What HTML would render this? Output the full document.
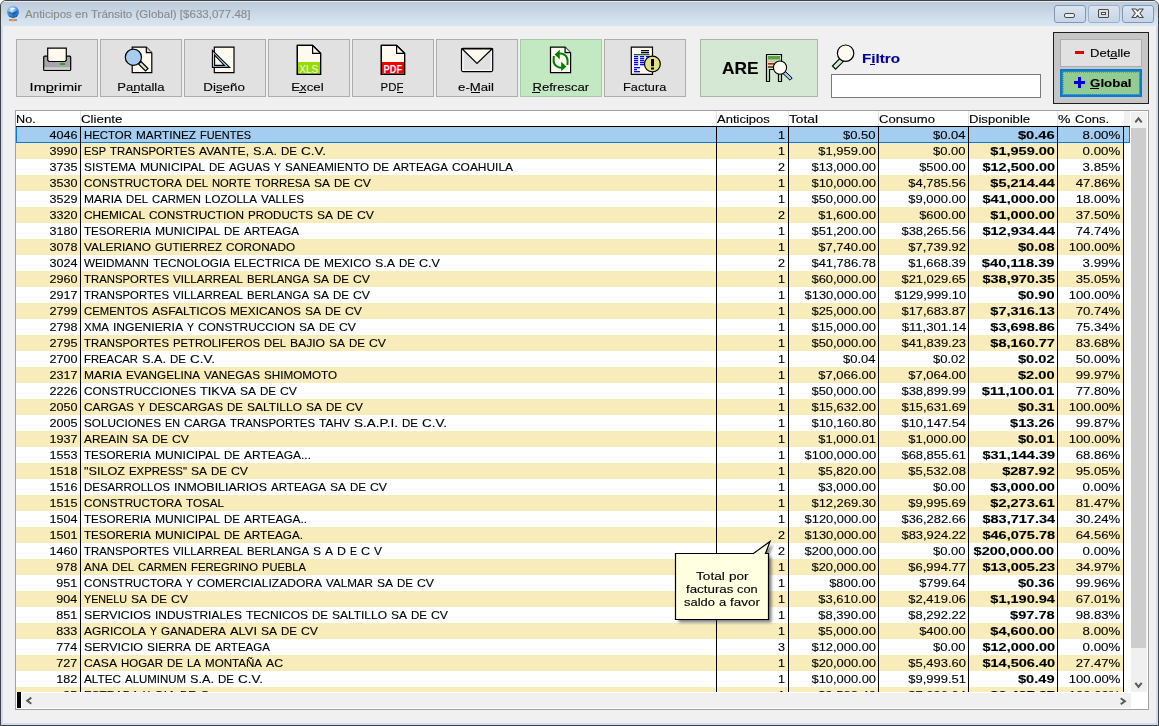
<!DOCTYPE html><html><head><meta charset="utf-8"><style>
*{box-sizing:border-box;margin:0;padding:0}
html,body{width:1159px;height:726px;overflow:hidden;background:#fff;font-family:"Liberation Sans",sans-serif;font-size:11px;color:#000}
.a{position:absolute}
.t{position:absolute;white-space:pre;display:block;-webkit-text-stroke:0.12px currentColor}
#win{position:absolute;left:0;top:0;width:1159px;height:726px;background:#cddcee;border:1px solid #404040;border-radius:6px 6px 0 0}
#title{position:absolute;left:1px;top:1px;width:1157px;height:25px;background:linear-gradient(#e6edf5 0,#e6edf5 1px,#bccbdb 1px,#c5d3e1 8px,#d2e0ee 18px,#d7e5f3 25px);border-radius:5px 5px 0 0}
#content{position:absolute;left:3px;top:26px;width:1153px;height:697px;background:#f0f0f0}
.tb{position:absolute;top:39px;width:82px;height:58px;background:#e1e1e1;border:1px solid #adadad}
.tbtn{position:absolute;top:5px;width:32px;height:18px;border:1px solid #8796b0;border-radius:3px;background:linear-gradient(#d9e4f0,#c5d5e8)}
.u{position:absolute;height:1px;background:#000}
</style></head><body>
<div id="win"></div><div id="title"></div>
<span class="t" style="left:25px;top:6px;font-size:11.5px;line-height:16px;color:#8a8a8a;transform:scaleX(1.0050);transform-origin:left;">Anticipos en Tránsito (Global) [$633,077.48]</span>
<svg class="a" style="left:5px;top:4px" width="18" height="20"><defs><radialGradient id="gl" cx="0.4" cy="0.3" r="0.75"><stop offset="0" stop-color="#e8f4ff"/><stop offset="0.35" stop-color="#7ab8f0"/><stop offset="0.75" stop-color="#2a78d0"/><stop offset="1" stop-color="#0c4a9a"/></radialGradient></defs><circle cx="8" cy="8" r="5.9" fill="url(#gl)"/><path d="M3 8.5 C4.5 7.5 6 8 7 9.5 C8 8 10 7.5 12.5 6.5 C12 9 10 10.5 8.5 12 C7.5 10.5 5 10 3 8.5 Z" fill="#1458a8" opacity="0.85"/><path d="M5 4.5 C6.5 3.5 9 3.5 10.5 4.5 C9 5.5 7 5.5 5 4.5 Z" fill="#ffffff" opacity="0.8"/><rect x="4" y="15" width="8" height="2" fill="#9a9a9a"/><circle cx="8" cy="16" r="1.5" fill="#f0a030"/></svg>
<div class="tbtn" style="left:1054px;border-color:#8796b0"></div>
<div class="tbtn" style="left:1088px;border-color:#a3afc0"></div>
<div class="tbtn" style="left:1122px;border-color:#8796b0"></div>
<div class="a" style="left:1064px;top:13px;width:11px;height:5px;background:#ececec;border:1px solid #4a4a4a;border-radius:2px"></div>
<div class="a" style="left:1098px;top:9px;width:11px;height:9px;border:1.5px solid #4a4a4a;background:#dcdcdc;border-radius:1px"></div><div class="a" style="left:1101px;top:12px;width:5px;height:3px;border:1px solid #4a4a4a;background:#f4f4f4"></div>
<svg class="a" style="left:0;top:0" width="1159" height="26"><path d="M1132 9 H1136 L1137.6 11.1 L1139.2 9 H1143.2 L1139.9 13.25 L1143.2 17.5 H1139.2 L1137.6 15.4 L1136 17.5 H1132 L1135.3 13.25 Z" fill="#f6f6f6" stroke="#4a4a4a" stroke-width="1.1" stroke-linejoin="round"/></svg>
<div id="content"></div>
<div class="tb" style="left:16px;"></div>
<span class="t" style="left:36.19px;top:79px;font-size:11px;line-height:16px;color:#000;transform:scaleX(1.3219);transform-origin:center;">Imprimir</span>
<div class="u" style="left:47px;top:92px;width:7px"></div>
<div class="tb" style="left:100px;"></div>
<span class="t" style="left:120.57px;top:79px;font-size:11px;line-height:16px;color:#000;transform:scaleX(1.1899);transform-origin:center;">Pantalla</span>
<div class="u" style="left:132px;top:92px;width:7px"></div>
<div class="tb" style="left:184px;"></div>
<span class="t" style="left:207.18px;top:79px;font-size:11px;line-height:16px;color:#000;transform:scaleX(1.2149);transform-origin:center;">Diseño</span>
<div class="u" style="left:216px;top:92px;width:6px"></div>
<div class="tb" style="left:268px;"></div>
<span class="t" style="left:294.30px;top:79px;font-size:11px;line-height:16px;color:#000;transform:scaleX(1.2008);transform-origin:center;">Excel</span>
<div class="u" style="left:299px;top:92px;width:7px"></div>
<div class="tb" style="left:352px;"></div>
<span class="t" style="left:380.90px;top:79px;font-size:11px;line-height:16px;color:#000;transform:scaleX(1.0364);transform-origin:center;">PDF</span>
<div class="u" style="left:397px;top:92px;width:6px"></div>
<div class="tb" style="left:436px;"></div>
<span class="t" style="left:460.93px;top:79px;font-size:11px;line-height:16px;color:#000;transform:scaleX(1.1953);transform-origin:center;">e-Mail</span>
<div class="u" style="left:471px;top:92px;width:9px"></div>
<div class="tb" style="left:520px;background:#c2e9c2;border-color:#a8c8a8;"></div>
<span class="t" style="left:536.76px;top:79px;font-size:11px;line-height:16px;color:#000;transform:scaleX(1.1871);transform-origin:center;">Refrescar</span>
<div class="u" style="left:532px;top:92px;width:8px"></div>
<div class="tb" style="left:604px;"></div>
<span class="t" style="left:625.60px;top:79px;font-size:11px;line-height:16px;color:#000;transform:scaleX(1.1558);transform-origin:center;">Factura</span>
<div class="a" style="left:700px;top:39px;width:118px;height:58px;background:#d5e8d4;border:1px solid #a8b8a8"></div>
<span class="t" style="left:721.5px;top:58px;font-size:16.5px;line-height:20px;font-weight:bold;color:#000;transform:scaleX(1.0477);transform-origin:left;">ARE</span>
<span class="t" style="left:861.5px;top:50.5px;font-size:12.5px;line-height:16px;font-weight:bold;color:#00009a;transform:scaleX(1.2162);transform-origin:left;">Filtro</span>
<div class="u" style="left:870px;top:64px;width:5px;background:#00009a"></div>
<div class="a" style="left:831px;top:74px;width:210px;height:24px;background:#fff;border:1px solid #7a7a7a"></div>
<div class="a" style="left:1053px;top:32px;width:96px;height:72px;background:#c6c6c6;border:1px solid #1e1e1e"></div>
<div class="a" style="left:1060px;top:39px;width:82px;height:28px;background:#e1e1e1;border:1px solid #adadad"></div>
<div class="a" style="left:1075px;top:51px;width:9px;height:3px;background:#e00000"></div>
<span class="t" style="left:1090px;top:45px;font-size:11px;line-height:16px;color:#000;transform:scaleX(1.1828);transform-origin:left;">Detalle</span>
<div class="u" style="left:1110px;top:58px;width:7px"></div>
<div class="a" style="left:1060px;top:69px;width:82px;height:28px;background:#92cc92;border:2px solid #0a78d6"></div>
<div class="a" style="left:1062px;top:71px;width:78px;height:24px;border:1px solid #2f8f9a"></div>
<div class="a" style="left:1063px;top:72px;width:77px;height:23px;border:1px dotted #a080b0"></div>
<div class="a" style="left:1074px;top:81px;width:11px;height:3px;background:#0000e0"></div><div class="a" style="left:1078px;top:77px;width:3px;height:11px;background:#0000e0"></div>
<span class="t" style="left:1090px;top:74.5px;font-size:11.5px;line-height:16px;font-weight:bold;color:#000;transform:scaleX(1.1599);transform-origin:left;">Global</span>
<div class="u" style="left:1090px;top:88px;width:9px"></div>
<svg class="a" style="left:0;top:0" width="1159" height="100"><rect x="43.7" y="56.2" width="27" height="14.3" rx="1" fill="#a6a5ab" stroke="#000" stroke-width="1.2" stroke-linejoin="miter"/><rect x="44.5" y="67.3" width="25.5" height="2.3" fill="#cfcfd2"/><path d="M47.7 48.2 H66.3 V60.2 L65 61.5 H49 L47.7 60.2 Z" fill="#fffaf0" stroke="#000" stroke-width="1.2" stroke-linejoin="miter"/><rect x="60" y="63" width="5" height="2" fill="#38a010"/><path d="M132.2 47.2 H146.3 L151.8 52.7 V72.7 H132.2 Z" fill="#fffaf0" stroke="#000" stroke-width="1.2" stroke-linejoin="miter"/><path d="M146.3 47.2 V52.7 H151.8" fill="#d0d0d0" stroke="#000" stroke-width="1.2" stroke-linejoin="miter"/><path d="M141 61.5 L148 68.5 L145.5 71 L138.5 64 Z" fill="#cdeccd" stroke="#000" stroke-width="1.2" stroke-linejoin="miter"/><circle cx="133.4" cy="57.2" r="8.1" fill="#a8ccf0" stroke="#000" stroke-width="1.2" stroke-linejoin="miter"/><path d="M214.3 47.2 H234 V72.7 H214.3 Z" fill="#fffaf0" stroke="#000" stroke-width="1.2" stroke-linejoin="miter"/><path d="M212.4 50.3 V67.4 H229.7 Z M214.6 55.2 V65.4 H224.4 Z" fill="#b4d8fc" fill-rule="evenodd" stroke="#000" stroke-width="1.1"/><path d="M297.3 45.3 H312.6 L320.6 53.3 V74.3 H297.3 Z" fill="#fffaf0" stroke="#000" stroke-width="1.2" stroke-linejoin="miter"/><rect x="298" y="62" width="22" height="11.6" fill="#98dc00"/><path d="M312.6 45.3 V53.3 H320.6" fill="none" stroke="#000" stroke-width="1.2" stroke-linejoin="miter"/><path d="M297.3 45.3 H312.6 L320.6 53.3 V74.3 H297.3 Z" fill="none" stroke="#000" stroke-width="1.2" stroke-linejoin="miter"/><text x="308.8" y="72.6" font-family="Liberation Sans" font-size="11.2" fill="#f4f4e8" text-anchor="middle" textLength="19" lengthAdjust="spacingAndGlyphs">XLS</text><path d="M381.3 45.3 H396.6 L404.6 53.3 V74.3 H381.3 Z" fill="#fffaf0" stroke="#000" stroke-width="1.2" stroke-linejoin="miter"/><rect x="382" y="62" width="22" height="11.6" fill="#f00000"/><path d="M396.6 45.3 V53.3 H404.6" fill="none" stroke="#000" stroke-width="1.2" stroke-linejoin="miter"/><path d="M381.3 45.3 H396.6 L404.6 53.3 V74.3 H381.3 Z" fill="none" stroke="#000" stroke-width="1.2" stroke-linejoin="miter"/><text x="392.8" y="72.6" font-family="Liberation Sans" font-size="11" font-weight="bold" fill="#f6f6f6" text-anchor="middle" textLength="18.5" lengthAdjust="spacingAndGlyphs">PDF</text><rect x="461.5" y="48.3" width="31.2" height="23.3" rx="1.5" fill="#e0e0e0" stroke="#000" stroke-width="1.2" stroke-linejoin="miter"/><rect x="463" y="50" width="28.2" height="20.3" fill="none" stroke="#fff" stroke-width="1"/><path d="M462.3 49 L477 63.5 L492 49 Z" fill="#fffaf0" stroke="#000" stroke-width="1.2" stroke-linejoin="miter"/><path d="M550.5 47.2 H565.1 L570.6 52.7 V72.7 H550.5 Z" fill="#fffaf0" stroke="#000" stroke-width="1.2" stroke-linejoin="miter"/><path d="M565.1 47.2 V52.7 H570.6" fill="#d8f0d8" stroke="#000" stroke-width="1.2" stroke-linejoin="miter"/><path d="M554.6 54.5 L559.8 49.8 V59.2 Z M566.4 66.5 L561.2 61.8 V71.2 Z" fill="#008000"/><path d="M559 53.6 A7.2 7.2 0 0 1 567.6 61 L567.4 65 M562 67.6 A7.2 7.2 0 0 1 553.6 60 L553.8 56" fill="none" stroke="#008000" stroke-width="2"/><path d="M631.3 47.2 H652.5 V74.3 H631.3 Z" fill="#fffaf0" stroke="#000" stroke-width="1.2" stroke-linejoin="miter"/><rect x="641" y="50" width="8" height="1.3" fill="#000"/><rect x="641" y="52" width="8" height="1.3" fill="#000"/><rect x="634" y="54" width="15.5" height="1.3" fill="#1a5a5a"/><rect x="634" y="56" width="4.2" height="1.3" fill="#0000ff"/><rect x="640" y="56" width="4.2" height="1.3" fill="#0000ff"/><rect x="646" y="56" width="3.5" height="1.3" fill="#0000ff"/><rect x="634" y="58" width="4.2" height="1.3" fill="#0000ff"/><rect x="640" y="58" width="4.2" height="1.3" fill="#0000ff"/><rect x="646" y="58" width="3.5" height="1.3" fill="#0000ff"/><rect x="634" y="60" width="4.2" height="1.3" fill="#0000ff"/><rect x="640" y="60" width="4.2" height="1.3" fill="#0000ff"/><rect x="646" y="60" width="3.5" height="1.3" fill="#0000ff"/><rect x="634" y="62" width="4.2" height="1.3" fill="#0000ff"/><rect x="640" y="62" width="4.2" height="1.3" fill="#0000ff"/><rect x="646" y="62" width="3.5" height="1.3" fill="#0000ff"/><rect x="634" y="64" width="4.2" height="1.3" fill="#0000ff"/><rect x="640" y="64" width="4.2" height="1.3" fill="#0000ff"/><rect x="646" y="64" width="3.5" height="1.3" fill="#0000ff"/><rect x="634" y="67" width="6" height="1.3" fill="#0000ff"/><rect x="634" y="69" width="3" height="1.3" fill="#0000ff"/><rect x="634" y="71" width="6" height="1.3" fill="#0000ff"/><circle cx="652.4" cy="64" r="7.9" fill="#e0e08a" stroke="#000" stroke-width="1.2" stroke-linejoin="miter"/><rect x="651" y="59" width="3" height="7.2" fill="#000"/><rect x="651" y="67.5" width="3" height="2" fill="#000"/><path d="M766.5 54.5 H781.5 V81.5 H778.5 V69.5 H769.5 V81.5 H766.5 Z" fill="#cde8cd" stroke="#000" stroke-width="1.2"/><rect x="768" y="56" width="12" height="3.5" fill="#60a040"/><rect x="768" y="60.5" width="12" height="1.5" fill="#b0d0b0"/><rect x="768" y="63" width="7" height="1.6" fill="#ff0000"/><rect x="768" y="66" width="5" height="2" fill="#606040"/><path d="M782.6 73.2 L784.8 71 L792.2 78 L790 80.2 Z" fill="#a8c8f0" stroke="#000" stroke-width="1"/><circle cx="780" cy="67.6" r="6.6" fill="#fffaf0" stroke="#000" stroke-width="1.1"/><path d="M840 58.4 L843.2 61.6 L835.6 69.2 L832.4 66 Z" fill="#cdeccd" stroke="#000" stroke-width="1.1"/><circle cx="845.6" cy="53.2" r="8.2" fill="#fffaf0" stroke="#000" stroke-width="1.2"/></svg>
<div class="a" style="left:15px;top:110px;width:1134px;height:600px;background:#fff;border:1px solid #a0a0a0"></div>
<span class="t" style="left:16px;top:111px;font-size:11px;line-height:16px;color:#000;transform:scaleX(1.1488);transform-origin:left;">No.</span>
<span class="t" style="left:81px;top:111px;font-size:11px;line-height:16px;color:#000;transform:scaleX(1.2091);transform-origin:left;">Cliente</span>
<span class="t" style="left:717px;top:111px;font-size:11px;line-height:16px;color:#000;transform:scaleX(1.1826);transform-origin:left;">Anticipos</span>
<span class="t" style="left:789px;top:111px;font-size:11px;line-height:16px;color:#000;transform:scaleX(1.2472);transform-origin:left;">Total</span>
<span class="t" style="left:879px;top:111px;font-size:11px;line-height:16px;color:#000;transform:scaleX(1.1872);transform-origin:left;">Consumo</span>
<span class="t" style="left:969px;top:111px;font-size:11px;line-height:16px;color:#000;transform:scaleX(1.1889);transform-origin:left;">Disponible</span>
<span class="t" style="left:1058px;top:111px;font-size:11px;line-height:16px;color:#000;transform:scaleX(1.2698);transform-origin:left;">%</span><span class="t" style="left:1074.56px;top:111px;font-size:11px;line-height:16px;color:#000;transform:scaleX(1.1886);transform-origin:left;">Cons.</span>
<div class="a" style="left:80px;top:111px;width:1px;height:15px;background:#e5e5e5"></div>
<div class="a" style="left:716px;top:111px;width:1px;height:15px;background:#e5e5e5"></div>
<div class="a" style="left:788px;top:111px;width:1px;height:15px;background:#e5e5e5"></div>
<div class="a" style="left:878px;top:111px;width:1px;height:15px;background:#e5e5e5"></div>
<div class="a" style="left:968px;top:111px;width:1px;height:15px;background:#e5e5e5"></div>
<div class="a" style="left:1057px;top:111px;width:1px;height:15px;background:#e5e5e5"></div>
<div class="a" style="left:1124px;top:111px;width:6px;height:15px;background:#f0f0f0"></div>
<div class="a" style="left:16px;top:126px;width:1108px;height:1px;background:#000"></div>
<div class="a" style="left:0;top:0;width:1159px;height:692px;overflow:hidden">
<div class="a" style="left:16px;top:127px;width:1107px;height:16px;background:#a4cdef"></div>
<span class="t" style="left:52.53px;top:127px;font-size:11px;line-height:16px;color:#000;transform:scaleX(1.1442);transform-origin:right;">4046</span>
<span class="t" style="left:83.5px;top:127px;font-size:11px;line-height:16px;color:#000;transform:scaleX(1.0379);transform-origin:left;">HECTOR</span><span class="t" style="left:135.5px;top:127px;font-size:11px;line-height:16px;color:#000;transform:scaleX(1.0710);transform-origin:left;">MARTINEZ</span><span class="t" style="left:199.5px;top:127px;font-size:11px;line-height:16px;color:#000;transform:scaleX(0.9934);transform-origin:left;">FUENTES</span>
<span class="t" style="left:779.28px;top:127px;font-size:11px;line-height:16px;color:#000;transform:scaleX(1.1442);transform-origin:right;">1</span>
<span class="t" style="left:848.37px;top:127px;font-size:11px;line-height:16px;color:#000;transform:scaleX(1.1843);transform-origin:right;">$0.50</span>
<span class="t" style="left:938.37px;top:127px;font-size:11px;line-height:16px;color:#000;transform:scaleX(1.1843);transform-origin:right;">$0.04</span>
<span class="t" style="left:1027.07px;top:127px;font-size:11px;line-height:16px;font-weight:bold;color:#000;transform:scaleX(1.3296);transform-origin:right;">$0.46</span>
<span class="t" style="left:1088.81px;top:127px;font-size:11px;line-height:16px;color:#000;transform:scaleX(1.2055);transform-origin:right;">8.00%</span>
<div class="a" style="left:16px;top:143px;width:1107px;height:16px;background:#f8edba"></div>
<span class="t" style="left:52.53px;top:143px;font-size:11px;line-height:16px;color:#000;transform:scaleX(1.1442);transform-origin:right;">3990</span>
<span class="t" style="left:83.5px;top:143px;font-size:11px;line-height:16px;color:#000;transform:scaleX(0.9995);transform-origin:left;">ESP</span><span class="t" style="left:109.5px;top:143px;font-size:11px;line-height:16px;color:#000;transform:scaleX(1.0326);transform-origin:left;">TRANSPORTES</span><span class="t" style="left:198.5px;top:143px;font-size:11px;line-height:16px;color:#000;transform:scaleX(1.1005);transform-origin:left;">AVANTE,</span><span class="t" style="left:252.5px;top:143px;font-size:11px;line-height:16px;color:#000;transform:scaleX(1.1546);transform-origin:left;">S.A.</span><span class="t" style="left:280.5px;top:143px;font-size:11px;line-height:16px;color:#000;transform:scaleX(1.0471);transform-origin:left;">DE</span><span class="t" style="left:300.5px;top:143px;font-size:11px;line-height:16px;color:#000;transform:scaleX(1.2265);transform-origin:left;">C.V.</span>
<span class="t" style="left:779.28px;top:143px;font-size:11px;line-height:16px;color:#000;transform:scaleX(1.1442);transform-origin:right;">1</span>
<span class="t" style="left:826.96px;top:143px;font-size:11px;line-height:16px;color:#000;transform:scaleX(1.1770);transform-origin:right;">$1,959.00</span>
<span class="t" style="left:938.37px;top:143px;font-size:11px;line-height:16px;color:#000;transform:scaleX(1.1843);transform-origin:right;">$0.00</span>
<span class="t" style="left:1005.66px;top:143px;font-size:11px;line-height:16px;font-weight:bold;color:#000;transform:scaleX(1.3201);transform-origin:right;">$1,959.00</span>
<span class="t" style="left:1088.81px;top:143px;font-size:11px;line-height:16px;color:#000;transform:scaleX(1.2055);transform-origin:right;">0.00%</span>
<div class="a" style="left:16px;top:159px;width:1107px;height:16px;background:#ffffff"></div>
<span class="t" style="left:52.53px;top:159px;font-size:11px;line-height:16px;color:#000;transform:scaleX(1.1442);transform-origin:right;">3735</span>
<span class="t" style="left:83.5px;top:159px;font-size:11px;line-height:16px;color:#000;transform:scaleX(1.0769);transform-origin:left;">SISTEMA</span><span class="t" style="left:139.5px;top:159px;font-size:11px;line-height:16px;color:#000;transform:scaleX(1.1002);transform-origin:left;">MUNICIPAL</span><span class="t" style="left:208.5px;top:159px;font-size:11px;line-height:16px;color:#000;transform:scaleX(1.0471);transform-origin:left;">DE</span><span class="t" style="left:228.5px;top:159px;font-size:11px;line-height:16px;color:#000;transform:scaleX(1.0646);transform-origin:left;">AGUAS</span><span class="t" style="left:273.5px;top:159px;font-size:11px;line-height:16px;color:#000;transform:scaleX(0.9541);transform-origin:left;">Y</span><span class="t" style="left:284.5px;top:159px;font-size:11px;line-height:16px;color:#000;transform:scaleX(1.0517);transform-origin:left;">SANEAMIENTO</span><span class="t" style="left:372.5px;top:159px;font-size:11px;line-height:16px;color:#000;transform:scaleX(1.0471);transform-origin:left;">DE</span><span class="t" style="left:392.5px;top:159px;font-size:11px;line-height:16px;color:#000;transform:scaleX(1.0502);transform-origin:left;">ARTEAGA</span><span class="t" style="left:451.5px;top:159px;font-size:11px;line-height:16px;color:#000;transform:scaleX(1.0847);transform-origin:left;">COAHUILA</span>
<span class="t" style="left:779.28px;top:159px;font-size:11px;line-height:16px;color:#000;transform:scaleX(1.1442);transform-origin:right;">2</span>
<span class="t" style="left:820.85px;top:159px;font-size:11px;line-height:16px;color:#000;transform:scaleX(1.1734);transform-origin:right;">$13,000.00</span>
<span class="t" style="left:926.14px;top:159px;font-size:11px;line-height:16px;color:#000;transform:scaleX(1.1720);transform-origin:right;">$500.00</span>
<span class="t" style="left:999.55px;top:159px;font-size:11px;line-height:16px;font-weight:bold;color:#000;transform:scaleX(1.3187);transform-origin:right;">$12,500.00</span>
<span class="t" style="left:1088.81px;top:159px;font-size:11px;line-height:16px;color:#000;transform:scaleX(1.2055);transform-origin:right;">3.85%</span>
<div class="a" style="left:16px;top:175px;width:1107px;height:16px;background:#f8edba"></div>
<span class="t" style="left:52.53px;top:175px;font-size:11px;line-height:16px;color:#000;transform:scaleX(1.1442);transform-origin:right;">3530</span>
<span class="t" style="left:83.5px;top:175px;font-size:11px;line-height:16px;color:#000;transform:scaleX(1.0573);transform-origin:left;">CONSTRUCTORA</span><span class="t" style="left:185.5px;top:175px;font-size:11px;line-height:16px;color:#000;transform:scaleX(1.0281);transform-origin:left;">DEL</span><span class="t" style="left:211.5px;top:175px;font-size:11px;line-height:16px;color:#000;transform:scaleX(1.0182);transform-origin:left;">NORTE</span><span class="t" style="left:254.5px;top:175px;font-size:11px;line-height:16px;color:#000;transform:scaleX(1.0382);transform-origin:left;">TORRESA</span><span class="t" style="left:313.5px;top:175px;font-size:11px;line-height:16px;color:#000;transform:scaleX(1.0904);transform-origin:left;">SA</span><span class="t" style="left:333.5px;top:175px;font-size:11px;line-height:16px;color:#000;transform:scaleX(1.0471);transform-origin:left;">DE</span><span class="t" style="left:353.5px;top:175px;font-size:11px;line-height:16px;color:#000;transform:scaleX(1.1125);transform-origin:left;">CV</span>
<span class="t" style="left:779.28px;top:175px;font-size:11px;line-height:16px;color:#000;transform:scaleX(1.1442);transform-origin:right;">1</span>
<span class="t" style="left:820.85px;top:175px;font-size:11px;line-height:16px;color:#000;transform:scaleX(1.1734);transform-origin:right;">$10,000.00</span>
<span class="t" style="left:916.96px;top:175px;font-size:11px;line-height:16px;color:#000;transform:scaleX(1.1770);transform-origin:right;">$4,785.56</span>
<span class="t" style="left:1005.66px;top:175px;font-size:11px;line-height:16px;font-weight:bold;color:#000;transform:scaleX(1.3201);transform-origin:right;">$5,214.44</span>
<span class="t" style="left:1082.69px;top:175px;font-size:11px;line-height:16px;color:#000;transform:scaleX(1.1955);transform-origin:right;">47.86%</span>
<div class="a" style="left:16px;top:191px;width:1107px;height:16px;background:#ffffff"></div>
<span class="t" style="left:52.53px;top:191px;font-size:11px;line-height:16px;color:#000;transform:scaleX(1.1442);transform-origin:right;">3529</span>
<span class="t" style="left:83.5px;top:191px;font-size:11px;line-height:16px;color:#000;transform:scaleX(1.0908);transform-origin:left;">MARIA</span><span class="t" style="left:125.5px;top:191px;font-size:11px;line-height:16px;color:#000;transform:scaleX(1.0281);transform-origin:left;">DEL</span><span class="t" style="left:151.5px;top:191px;font-size:11px;line-height:16px;color:#000;transform:scaleX(1.0279);transform-origin:left;">CARMEN</span><span class="t" style="left:204.5px;top:191px;font-size:11px;line-height:16px;color:#000;transform:scaleX(1.0500);transform-origin:left;">LOZOLLA</span><span class="t" style="left:260.5px;top:191px;font-size:11px;line-height:16px;color:#000;transform:scaleX(1.0548);transform-origin:left;">VALLES</span>
<span class="t" style="left:779.28px;top:191px;font-size:11px;line-height:16px;color:#000;transform:scaleX(1.1442);transform-origin:right;">1</span>
<span class="t" style="left:820.85px;top:191px;font-size:11px;line-height:16px;color:#000;transform:scaleX(1.1734);transform-origin:right;">$50,000.00</span>
<span class="t" style="left:916.96px;top:191px;font-size:11px;line-height:16px;color:#000;transform:scaleX(1.1770);transform-origin:right;">$9,000.00</span>
<span class="t" style="left:999.55px;top:191px;font-size:11px;line-height:16px;font-weight:bold;color:#000;transform:scaleX(1.3187);transform-origin:right;">$41,000.00</span>
<span class="t" style="left:1082.69px;top:191px;font-size:11px;line-height:16px;color:#000;transform:scaleX(1.1955);transform-origin:right;">18.00%</span>
<div class="a" style="left:16px;top:207px;width:1107px;height:16px;background:#f8edba"></div>
<span class="t" style="left:52.53px;top:207px;font-size:11px;line-height:16px;color:#000;transform:scaleX(1.1442);transform-origin:right;">3320</span>
<span class="t" style="left:83.5px;top:207px;font-size:11px;line-height:16px;color:#000;transform:scaleX(1.0731);transform-origin:left;">CHEMICAL</span><span class="t" style="left:148.5px;top:207px;font-size:11px;line-height:16px;color:#000;transform:scaleX(1.0721);transform-origin:left;">CONSTRUCTION</span><span class="t" style="left:247.5px;top:207px;font-size:11px;line-height:16px;color:#000;transform:scaleX(1.0531);transform-origin:left;">PRODUCTS</span><span class="t" style="left:316.5px;top:207px;font-size:11px;line-height:16px;color:#000;transform:scaleX(1.0904);transform-origin:left;">SA</span><span class="t" style="left:336.5px;top:207px;font-size:11px;line-height:16px;color:#000;transform:scaleX(1.0471);transform-origin:left;">DE</span><span class="t" style="left:356.5px;top:207px;font-size:11px;line-height:16px;color:#000;transform:scaleX(1.1125);transform-origin:left;">CV</span>
<span class="t" style="left:779.28px;top:207px;font-size:11px;line-height:16px;color:#000;transform:scaleX(1.1442);transform-origin:right;">2</span>
<span class="t" style="left:826.96px;top:207px;font-size:11px;line-height:16px;color:#000;transform:scaleX(1.1770);transform-origin:right;">$1,600.00</span>
<span class="t" style="left:926.14px;top:207px;font-size:11px;line-height:16px;color:#000;transform:scaleX(1.1720);transform-origin:right;">$600.00</span>
<span class="t" style="left:1005.66px;top:207px;font-size:11px;line-height:16px;font-weight:bold;color:#000;transform:scaleX(1.3201);transform-origin:right;">$1,000.00</span>
<span class="t" style="left:1082.69px;top:207px;font-size:11px;line-height:16px;color:#000;transform:scaleX(1.1955);transform-origin:right;">37.50%</span>
<div class="a" style="left:16px;top:223px;width:1107px;height:16px;background:#ffffff"></div>
<span class="t" style="left:52.53px;top:223px;font-size:11px;line-height:16px;color:#000;transform:scaleX(1.1442);transform-origin:right;">3180</span>
<span class="t" style="left:83.5px;top:223px;font-size:11px;line-height:16px;color:#000;transform:scaleX(1.0540);transform-origin:left;">TESORERIA</span><span class="t" style="left:154.5px;top:223px;font-size:11px;line-height:16px;color:#000;transform:scaleX(1.1002);transform-origin:left;">MUNICIPAL</span><span class="t" style="left:223.5px;top:223px;font-size:11px;line-height:16px;color:#000;transform:scaleX(1.0471);transform-origin:left;">DE</span><span class="t" style="left:243.5px;top:223px;font-size:11px;line-height:16px;color:#000;transform:scaleX(1.0502);transform-origin:left;">ARTEAGA</span>
<span class="t" style="left:779.28px;top:223px;font-size:11px;line-height:16px;color:#000;transform:scaleX(1.1442);transform-origin:right;">1</span>
<span class="t" style="left:820.85px;top:223px;font-size:11px;line-height:16px;color:#000;transform:scaleX(1.1734);transform-origin:right;">$51,200.00</span>
<span class="t" style="left:910.85px;top:223px;font-size:11px;line-height:16px;color:#000;transform:scaleX(1.1734);transform-origin:right;">$38,265.56</span>
<span class="t" style="left:999.55px;top:223px;font-size:11px;line-height:16px;font-weight:bold;color:#000;transform:scaleX(1.3187);transform-origin:right;">$12,934.44</span>
<span class="t" style="left:1082.69px;top:223px;font-size:11px;line-height:16px;color:#000;transform:scaleX(1.1955);transform-origin:right;">74.74%</span>
<div class="a" style="left:16px;top:239px;width:1107px;height:16px;background:#f8edba"></div>
<span class="t" style="left:52.53px;top:239px;font-size:11px;line-height:16px;color:#000;transform:scaleX(1.1442);transform-origin:right;">3078</span>
<span class="t" style="left:83.5px;top:239px;font-size:11px;line-height:16px;color:#000;transform:scaleX(1.0780);transform-origin:left;">VALERIANO</span><span class="t" style="left:154.5px;top:239px;font-size:11px;line-height:16px;color:#000;transform:scaleX(1.0542);transform-origin:left;">GUTIERREZ</span><span class="t" style="left:225.5px;top:239px;font-size:11px;line-height:16px;color:#000;transform:scaleX(1.0651);transform-origin:left;">CORONADO</span>
<span class="t" style="left:779.28px;top:239px;font-size:11px;line-height:16px;color:#000;transform:scaleX(1.1442);transform-origin:right;">1</span>
<span class="t" style="left:826.96px;top:239px;font-size:11px;line-height:16px;color:#000;transform:scaleX(1.1770);transform-origin:right;">$7,740.00</span>
<span class="t" style="left:916.96px;top:239px;font-size:11px;line-height:16px;color:#000;transform:scaleX(1.1770);transform-origin:right;">$7,739.92</span>
<span class="t" style="left:1027.07px;top:239px;font-size:11px;line-height:16px;font-weight:bold;color:#000;transform:scaleX(1.3296);transform-origin:right;">$0.08</span>
<span class="t" style="left:1076.57px;top:239px;font-size:11px;line-height:16px;color:#000;transform:scaleX(1.1882);transform-origin:right;">100.00%</span>
<div class="a" style="left:16px;top:255px;width:1107px;height:16px;background:#ffffff"></div>
<span class="t" style="left:52.53px;top:255px;font-size:11px;line-height:16px;color:#000;transform:scaleX(1.1442);transform-origin:right;">3024</span>
<span class="t" style="left:83.5px;top:255px;font-size:11px;line-height:16px;color:#000;transform:scaleX(1.0637);transform-origin:left;">WEIDMANN</span><span class="t" style="left:152.5px;top:255px;font-size:11px;line-height:16px;color:#000;transform:scaleX(1.0676);transform-origin:left;">TECNOLOGIA</span><span class="t" style="left:233.5px;top:255px;font-size:11px;line-height:16px;color:#000;transform:scaleX(1.0691);transform-origin:left;">ELECTRICA</span><span class="t" style="left:303.5px;top:255px;font-size:11px;line-height:16px;color:#000;transform:scaleX(1.0471);transform-origin:left;">DE</span><span class="t" style="left:323.5px;top:255px;font-size:11px;line-height:16px;color:#000;transform:scaleX(1.0831);transform-origin:left;">MEXICO</span><span class="t" style="left:374.5px;top:255px;font-size:11px;line-height:16px;color:#000;transform:scaleX(1.1280);transform-origin:left;">S.A</span><span class="t" style="left:398.5px;top:255px;font-size:11px;line-height:16px;color:#000;transform:scaleX(1.0471);transform-origin:left;">DE</span><span class="t" style="left:418.5px;top:255px;font-size:11px;line-height:16px;color:#000;transform:scaleX(1.1452);transform-origin:left;">C.V</span>
<span class="t" style="left:779.28px;top:255px;font-size:11px;line-height:16px;color:#000;transform:scaleX(1.1442);transform-origin:right;">2</span>
<span class="t" style="left:820.85px;top:255px;font-size:11px;line-height:16px;color:#000;transform:scaleX(1.1734);transform-origin:right;">$41,786.78</span>
<span class="t" style="left:916.96px;top:255px;font-size:11px;line-height:16px;color:#000;transform:scaleX(1.1770);transform-origin:right;">$1,668.39</span>
<span class="t" style="left:1000.15px;top:255px;font-size:11px;line-height:16px;font-weight:bold;color:#000;transform:scaleX(1.3334);transform-origin:right;">$40,118.39</span>
<span class="t" style="left:1088.81px;top:255px;font-size:11px;line-height:16px;color:#000;transform:scaleX(1.2055);transform-origin:right;">3.99%</span>
<div class="a" style="left:16px;top:271px;width:1107px;height:16px;background:#f8edba"></div>
<span class="t" style="left:52.53px;top:271px;font-size:11px;line-height:16px;color:#000;transform:scaleX(1.1442);transform-origin:right;">2960</span>
<span class="t" style="left:83.5px;top:271px;font-size:11px;line-height:16px;color:#000;transform:scaleX(1.0326);transform-origin:left;">TRANSPORTES</span><span class="t" style="left:172.5px;top:271px;font-size:11px;line-height:16px;color:#000;transform:scaleX(1.0503);transform-origin:left;">VILLARREAL</span><span class="t" style="left:246.5px;top:271px;font-size:11px;line-height:16px;color:#000;transform:scaleX(1.0349);transform-origin:left;">BERLANGA</span><span class="t" style="left:312.5px;top:271px;font-size:11px;line-height:16px;color:#000;transform:scaleX(1.0904);transform-origin:left;">SA</span><span class="t" style="left:332.5px;top:271px;font-size:11px;line-height:16px;color:#000;transform:scaleX(1.0471);transform-origin:left;">DE</span><span class="t" style="left:352.5px;top:271px;font-size:11px;line-height:16px;color:#000;transform:scaleX(1.1125);transform-origin:left;">CV</span>
<span class="t" style="left:779.28px;top:271px;font-size:11px;line-height:16px;color:#000;transform:scaleX(1.1442);transform-origin:right;">1</span>
<span class="t" style="left:820.85px;top:271px;font-size:11px;line-height:16px;color:#000;transform:scaleX(1.1734);transform-origin:right;">$60,000.00</span>
<span class="t" style="left:910.85px;top:271px;font-size:11px;line-height:16px;color:#000;transform:scaleX(1.1734);transform-origin:right;">$21,029.65</span>
<span class="t" style="left:999.55px;top:271px;font-size:11px;line-height:16px;font-weight:bold;color:#000;transform:scaleX(1.3187);transform-origin:right;">$38,970.35</span>
<span class="t" style="left:1082.69px;top:271px;font-size:11px;line-height:16px;color:#000;transform:scaleX(1.1955);transform-origin:right;">35.05%</span>
<div class="a" style="left:16px;top:287px;width:1107px;height:16px;background:#ffffff"></div>
<span class="t" style="left:52.53px;top:287px;font-size:11px;line-height:16px;color:#000;transform:scaleX(1.1442);transform-origin:right;">2917</span>
<span class="t" style="left:83.5px;top:287px;font-size:11px;line-height:16px;color:#000;transform:scaleX(1.0326);transform-origin:left;">TRANSPORTES</span><span class="t" style="left:172.5px;top:287px;font-size:11px;line-height:16px;color:#000;transform:scaleX(1.0503);transform-origin:left;">VILLARREAL</span><span class="t" style="left:246.5px;top:287px;font-size:11px;line-height:16px;color:#000;transform:scaleX(1.0349);transform-origin:left;">BERLANGA</span><span class="t" style="left:312.5px;top:287px;font-size:11px;line-height:16px;color:#000;transform:scaleX(1.0904);transform-origin:left;">SA</span><span class="t" style="left:332.5px;top:287px;font-size:11px;line-height:16px;color:#000;transform:scaleX(1.0471);transform-origin:left;">DE</span><span class="t" style="left:352.5px;top:287px;font-size:11px;line-height:16px;color:#000;transform:scaleX(1.1125);transform-origin:left;">CV</span>
<span class="t" style="left:779.28px;top:287px;font-size:11px;line-height:16px;color:#000;transform:scaleX(1.1442);transform-origin:right;">1</span>
<span class="t" style="left:814.73px;top:287px;font-size:11px;line-height:16px;color:#000;transform:scaleX(1.1705);transform-origin:right;">$130,000.00</span>
<span class="t" style="left:904.73px;top:287px;font-size:11px;line-height:16px;color:#000;transform:scaleX(1.1705);transform-origin:right;">$129,999.10</span>
<span class="t" style="left:1027.07px;top:287px;font-size:11px;line-height:16px;font-weight:bold;color:#000;transform:scaleX(1.3296);transform-origin:right;">$0.90</span>
<span class="t" style="left:1076.57px;top:287px;font-size:11px;line-height:16px;color:#000;transform:scaleX(1.1882);transform-origin:right;">100.00%</span>
<div class="a" style="left:16px;top:303px;width:1107px;height:16px;background:#f8edba"></div>
<span class="t" style="left:52.53px;top:303px;font-size:11px;line-height:16px;color:#000;transform:scaleX(1.1442);transform-origin:right;">2799</span>
<span class="t" style="left:83.5px;top:303px;font-size:11px;line-height:16px;color:#000;transform:scaleX(1.0300);transform-origin:left;">CEMENTOS</span><span class="t" style="left:151.5px;top:303px;font-size:11px;line-height:16px;color:#000;transform:scaleX(1.1039);transform-origin:left;">ASFALTICOS</span><span class="t" style="left:229.5px;top:303px;font-size:11px;line-height:16px;color:#000;transform:scaleX(1.0756);transform-origin:left;">MEXICANOS</span><span class="t" style="left:304.5px;top:303px;font-size:11px;line-height:16px;color:#000;transform:scaleX(1.0904);transform-origin:left;">SA</span><span class="t" style="left:324.5px;top:303px;font-size:11px;line-height:16px;color:#000;transform:scaleX(1.0471);transform-origin:left;">DE</span><span class="t" style="left:344.5px;top:303px;font-size:11px;line-height:16px;color:#000;transform:scaleX(1.1125);transform-origin:left;">CV</span>
<span class="t" style="left:779.28px;top:303px;font-size:11px;line-height:16px;color:#000;transform:scaleX(1.1442);transform-origin:right;">1</span>
<span class="t" style="left:820.85px;top:303px;font-size:11px;line-height:16px;color:#000;transform:scaleX(1.1734);transform-origin:right;">$25,000.00</span>
<span class="t" style="left:910.85px;top:303px;font-size:11px;line-height:16px;color:#000;transform:scaleX(1.1734);transform-origin:right;">$17,683.87</span>
<span class="t" style="left:1005.66px;top:303px;font-size:11px;line-height:16px;font-weight:bold;color:#000;transform:scaleX(1.3201);transform-origin:right;">$7,316.13</span>
<span class="t" style="left:1082.69px;top:303px;font-size:11px;line-height:16px;color:#000;transform:scaleX(1.1955);transform-origin:right;">70.74%</span>
<div class="a" style="left:16px;top:319px;width:1107px;height:16px;background:#ffffff"></div>
<span class="t" style="left:52.53px;top:319px;font-size:11px;line-height:16px;color:#000;transform:scaleX(1.1442);transform-origin:right;">2798</span>
<span class="t" style="left:83.5px;top:319px;font-size:11px;line-height:16px;color:#000;transform:scaleX(1.0488);transform-origin:left;">XMA</span><span class="t" style="left:112.5px;top:319px;font-size:11px;line-height:16px;color:#000;transform:scaleX(1.1012);transform-origin:left;">INGENIERIA</span><span class="t" style="left:186.5px;top:319px;font-size:11px;line-height:16px;color:#000;transform:scaleX(0.9541);transform-origin:left;">Y</span><span class="t" style="left:197.5px;top:319px;font-size:11px;line-height:16px;color:#000;transform:scaleX(1.0798);transform-origin:left;">CONSTRUCCION</span><span class="t" style="left:298.5px;top:319px;font-size:11px;line-height:16px;color:#000;transform:scaleX(1.0904);transform-origin:left;">SA</span><span class="t" style="left:318.5px;top:319px;font-size:11px;line-height:16px;color:#000;transform:scaleX(1.0471);transform-origin:left;">DE</span><span class="t" style="left:338.5px;top:319px;font-size:11px;line-height:16px;color:#000;transform:scaleX(1.1125);transform-origin:left;">CV</span>
<span class="t" style="left:779.28px;top:319px;font-size:11px;line-height:16px;color:#000;transform:scaleX(1.1442);transform-origin:right;">1</span>
<span class="t" style="left:820.85px;top:319px;font-size:11px;line-height:16px;color:#000;transform:scaleX(1.1734);transform-origin:right;">$15,000.00</span>
<span class="t" style="left:911.66px;top:319px;font-size:11px;line-height:16px;color:#000;transform:scaleX(1.1911);transform-origin:right;">$11,301.14</span>
<span class="t" style="left:1005.66px;top:319px;font-size:11px;line-height:16px;font-weight:bold;color:#000;transform:scaleX(1.3201);transform-origin:right;">$3,698.86</span>
<span class="t" style="left:1082.69px;top:319px;font-size:11px;line-height:16px;color:#000;transform:scaleX(1.1955);transform-origin:right;">75.34%</span>
<div class="a" style="left:16px;top:335px;width:1107px;height:16px;background:#f8edba"></div>
<span class="t" style="left:52.53px;top:335px;font-size:11px;line-height:16px;color:#000;transform:scaleX(1.1442);transform-origin:right;">2795</span>
<span class="t" style="left:83.5px;top:335px;font-size:11px;line-height:16px;color:#000;transform:scaleX(1.0326);transform-origin:left;">TRANSPORTES</span><span class="t" style="left:172.5px;top:335px;font-size:11px;line-height:16px;color:#000;transform:scaleX(1.0240);transform-origin:left;">PETROLIFEROS</span><span class="t" style="left:263.5px;top:335px;font-size:11px;line-height:16px;color:#000;transform:scaleX(1.0281);transform-origin:left;">DEL</span><span class="t" style="left:289.5px;top:335px;font-size:11px;line-height:16px;color:#000;transform:scaleX(1.1011);transform-origin:left;">BAJIO</span><span class="t" style="left:328.5px;top:335px;font-size:11px;line-height:16px;color:#000;transform:scaleX(1.0904);transform-origin:left;">SA</span><span class="t" style="left:348.5px;top:335px;font-size:11px;line-height:16px;color:#000;transform:scaleX(1.0471);transform-origin:left;">DE</span><span class="t" style="left:368.5px;top:335px;font-size:11px;line-height:16px;color:#000;transform:scaleX(1.1125);transform-origin:left;">CV</span>
<span class="t" style="left:779.28px;top:335px;font-size:11px;line-height:16px;color:#000;transform:scaleX(1.1442);transform-origin:right;">1</span>
<span class="t" style="left:820.85px;top:335px;font-size:11px;line-height:16px;color:#000;transform:scaleX(1.1734);transform-origin:right;">$50,000.00</span>
<span class="t" style="left:910.85px;top:335px;font-size:11px;line-height:16px;color:#000;transform:scaleX(1.1734);transform-origin:right;">$41,839.23</span>
<span class="t" style="left:1005.66px;top:335px;font-size:11px;line-height:16px;font-weight:bold;color:#000;transform:scaleX(1.3201);transform-origin:right;">$8,160.77</span>
<span class="t" style="left:1082.69px;top:335px;font-size:11px;line-height:16px;color:#000;transform:scaleX(1.1955);transform-origin:right;">83.68%</span>
<div class="a" style="left:16px;top:351px;width:1107px;height:16px;background:#ffffff"></div>
<span class="t" style="left:52.53px;top:351px;font-size:11px;line-height:16px;color:#000;transform:scaleX(1.1442);transform-origin:right;">2700</span>
<span class="t" style="left:83.5px;top:351px;font-size:11px;line-height:16px;color:#000;transform:scaleX(1.0274);transform-origin:left;">FREACAR</span><span class="t" style="left:141.5px;top:351px;font-size:11px;line-height:16px;color:#000;transform:scaleX(1.1546);transform-origin:left;">S.A.</span><span class="t" style="left:169.5px;top:351px;font-size:11px;line-height:16px;color:#000;transform:scaleX(1.0471);transform-origin:left;">DE</span><span class="t" style="left:189.5px;top:351px;font-size:11px;line-height:16px;color:#000;transform:scaleX(1.2265);transform-origin:left;">C.V.</span>
<span class="t" style="left:779.28px;top:351px;font-size:11px;line-height:16px;color:#000;transform:scaleX(1.1442);transform-origin:right;">1</span>
<span class="t" style="left:848.37px;top:351px;font-size:11px;line-height:16px;color:#000;transform:scaleX(1.1843);transform-origin:right;">$0.04</span>
<span class="t" style="left:938.37px;top:351px;font-size:11px;line-height:16px;color:#000;transform:scaleX(1.1843);transform-origin:right;">$0.02</span>
<span class="t" style="left:1027.07px;top:351px;font-size:11px;line-height:16px;font-weight:bold;color:#000;transform:scaleX(1.3296);transform-origin:right;">$0.02</span>
<span class="t" style="left:1082.69px;top:351px;font-size:11px;line-height:16px;color:#000;transform:scaleX(1.1955);transform-origin:right;">50.00%</span>
<div class="a" style="left:16px;top:367px;width:1107px;height:16px;background:#f8edba"></div>
<span class="t" style="left:52.53px;top:367px;font-size:11px;line-height:16px;color:#000;transform:scaleX(1.1442);transform-origin:right;">2317</span>
<span class="t" style="left:83.5px;top:367px;font-size:11px;line-height:16px;color:#000;transform:scaleX(1.0908);transform-origin:left;">MARIA</span><span class="t" style="left:125.5px;top:367px;font-size:11px;line-height:16px;color:#000;transform:scaleX(1.0650);transform-origin:left;">EVANGELINA</span><span class="t" style="left:203.5px;top:367px;font-size:11px;line-height:16px;color:#000;transform:scaleX(1.0693);transform-origin:left;">VANEGAS</span><span class="t" style="left:263.5px;top:367px;font-size:11px;line-height:16px;color:#000;transform:scaleX(1.0602);transform-origin:left;">SHIMOMOTO</span>
<span class="t" style="left:779.28px;top:367px;font-size:11px;line-height:16px;color:#000;transform:scaleX(1.1442);transform-origin:right;">1</span>
<span class="t" style="left:826.96px;top:367px;font-size:11px;line-height:16px;color:#000;transform:scaleX(1.1770);transform-origin:right;">$7,066.00</span>
<span class="t" style="left:916.96px;top:367px;font-size:11px;line-height:16px;color:#000;transform:scaleX(1.1770);transform-origin:right;">$7,064.00</span>
<span class="t" style="left:1027.07px;top:367px;font-size:11px;line-height:16px;font-weight:bold;color:#000;transform:scaleX(1.3296);transform-origin:right;">$2.00</span>
<span class="t" style="left:1082.69px;top:367px;font-size:11px;line-height:16px;color:#000;transform:scaleX(1.1955);transform-origin:right;">99.97%</span>
<div class="a" style="left:16px;top:383px;width:1107px;height:16px;background:#ffffff"></div>
<span class="t" style="left:52.53px;top:383px;font-size:11px;line-height:16px;color:#000;transform:scaleX(1.1442);transform-origin:right;">2226</span>
<span class="t" style="left:83.5px;top:383px;font-size:11px;line-height:16px;color:#000;transform:scaleX(1.0717);transform-origin:left;">CONSTRUCCIONES</span><span class="t" style="left:199.5px;top:383px;font-size:11px;line-height:16px;color:#000;transform:scaleX(1.1624);transform-origin:left;">TIKVA</span><span class="t" style="left:239.5px;top:383px;font-size:11px;line-height:16px;color:#000;transform:scaleX(1.0904);transform-origin:left;">SA</span><span class="t" style="left:259.5px;top:383px;font-size:11px;line-height:16px;color:#000;transform:scaleX(1.0471);transform-origin:left;">DE</span><span class="t" style="left:279.5px;top:383px;font-size:11px;line-height:16px;color:#000;transform:scaleX(1.1125);transform-origin:left;">CV</span>
<span class="t" style="left:779.28px;top:383px;font-size:11px;line-height:16px;color:#000;transform:scaleX(1.1442);transform-origin:right;">1</span>
<span class="t" style="left:820.85px;top:383px;font-size:11px;line-height:16px;color:#000;transform:scaleX(1.1734);transform-origin:right;">$50,000.00</span>
<span class="t" style="left:910.85px;top:383px;font-size:11px;line-height:16px;color:#000;transform:scaleX(1.1734);transform-origin:right;">$38,899.99</span>
<span class="t" style="left:1000.15px;top:383px;font-size:11px;line-height:16px;font-weight:bold;color:#000;transform:scaleX(1.3334);transform-origin:right;">$11,100.01</span>
<span class="t" style="left:1082.69px;top:383px;font-size:11px;line-height:16px;color:#000;transform:scaleX(1.1955);transform-origin:right;">77.80%</span>
<div class="a" style="left:16px;top:399px;width:1107px;height:16px;background:#f8edba"></div>
<span class="t" style="left:52.53px;top:399px;font-size:11px;line-height:16px;color:#000;transform:scaleX(1.1442);transform-origin:right;">2050</span>
<span class="t" style="left:83.5px;top:399px;font-size:11px;line-height:16px;color:#000;transform:scaleX(1.0763);transform-origin:left;">CARGAS</span><span class="t" style="left:137.5px;top:399px;font-size:11px;line-height:16px;color:#000;transform:scaleX(0.9541);transform-origin:left;">Y</span><span class="t" style="left:148.5px;top:399px;font-size:11px;line-height:16px;color:#000;transform:scaleX(1.0713);transform-origin:left;">DESCARGAS</span><span class="t" style="left:226.5px;top:399px;font-size:11px;line-height:16px;color:#000;transform:scaleX(1.0471);transform-origin:left;">DE</span><span class="t" style="left:246.5px;top:399px;font-size:11px;line-height:16px;color:#000;transform:scaleX(1.0882);transform-origin:left;">SALTILLO</span><span class="t" style="left:305.5px;top:399px;font-size:11px;line-height:16px;color:#000;transform:scaleX(1.0904);transform-origin:left;">SA</span><span class="t" style="left:325.5px;top:399px;font-size:11px;line-height:16px;color:#000;transform:scaleX(1.0471);transform-origin:left;">DE</span><span class="t" style="left:345.5px;top:399px;font-size:11px;line-height:16px;color:#000;transform:scaleX(1.1125);transform-origin:left;">CV</span>
<span class="t" style="left:779.28px;top:399px;font-size:11px;line-height:16px;color:#000;transform:scaleX(1.1442);transform-origin:right;">1</span>
<span class="t" style="left:820.85px;top:399px;font-size:11px;line-height:16px;color:#000;transform:scaleX(1.1734);transform-origin:right;">$15,632.00</span>
<span class="t" style="left:910.85px;top:399px;font-size:11px;line-height:16px;color:#000;transform:scaleX(1.1734);transform-origin:right;">$15,631.69</span>
<span class="t" style="left:1027.07px;top:399px;font-size:11px;line-height:16px;font-weight:bold;color:#000;transform:scaleX(1.3296);transform-origin:right;">$0.31</span>
<span class="t" style="left:1076.57px;top:399px;font-size:11px;line-height:16px;color:#000;transform:scaleX(1.1882);transform-origin:right;">100.00%</span>
<div class="a" style="left:16px;top:415px;width:1107px;height:16px;background:#ffffff"></div>
<span class="t" style="left:52.53px;top:415px;font-size:11px;line-height:16px;color:#000;transform:scaleX(1.1442);transform-origin:right;">2005</span>
<span class="t" style="left:83.5px;top:415px;font-size:11px;line-height:16px;color:#000;transform:scaleX(1.0675);transform-origin:left;">SOLUCIONES</span><span class="t" style="left:164.5px;top:415px;font-size:11px;line-height:16px;color:#000;transform:scaleX(0.9816);transform-origin:left;">EN</span><span class="t" style="left:183.5px;top:415px;font-size:11px;line-height:16px;color:#000;transform:scaleX(1.0737);transform-origin:left;">CARGA</span><span class="t" style="left:229.5px;top:415px;font-size:11px;line-height:16px;color:#000;transform:scaleX(1.0326);transform-origin:left;">TRANSPORTES</span><span class="t" style="left:318.5px;top:415px;font-size:11px;line-height:16px;color:#000;transform:scaleX(1.0869);transform-origin:left;">TAHV</span><span class="t" style="left:353.5px;top:415px;font-size:11px;line-height:16px;color:#000;transform:scaleX(1.2265);transform-origin:left;">S.A.P.I.</span><span class="t" style="left:401.5px;top:415px;font-size:11px;line-height:16px;color:#000;transform:scaleX(1.0471);transform-origin:left;">DE</span><span class="t" style="left:421.5px;top:415px;font-size:11px;line-height:16px;color:#000;transform:scaleX(1.2265);transform-origin:left;">C.V.</span>
<span class="t" style="left:779.28px;top:415px;font-size:11px;line-height:16px;color:#000;transform:scaleX(1.1442);transform-origin:right;">1</span>
<span class="t" style="left:820.85px;top:415px;font-size:11px;line-height:16px;color:#000;transform:scaleX(1.1734);transform-origin:right;">$10,160.80</span>
<span class="t" style="left:910.85px;top:415px;font-size:11px;line-height:16px;color:#000;transform:scaleX(1.1734);transform-origin:right;">$10,147.54</span>
<span class="t" style="left:1020.96px;top:415px;font-size:11px;line-height:16px;font-weight:bold;color:#000;transform:scaleX(1.3256);transform-origin:right;">$13.26</span>
<span class="t" style="left:1082.69px;top:415px;font-size:11px;line-height:16px;color:#000;transform:scaleX(1.1955);transform-origin:right;">99.87%</span>
<div class="a" style="left:16px;top:431px;width:1107px;height:16px;background:#f8edba"></div>
<span class="t" style="left:52.53px;top:431px;font-size:11px;line-height:16px;color:#000;transform:scaleX(1.1442);transform-origin:right;">1937</span>
<span class="t" style="left:83.5px;top:431px;font-size:11px;line-height:16px;color:#000;transform:scaleX(1.0744);transform-origin:left;">AREAIN</span><span class="t" style="left:131.5px;top:431px;font-size:11px;line-height:16px;color:#000;transform:scaleX(1.0904);transform-origin:left;">SA</span><span class="t" style="left:151.5px;top:431px;font-size:11px;line-height:16px;color:#000;transform:scaleX(1.0471);transform-origin:left;">DE</span><span class="t" style="left:171.5px;top:431px;font-size:11px;line-height:16px;color:#000;transform:scaleX(1.1125);transform-origin:left;">CV</span>
<span class="t" style="left:779.28px;top:431px;font-size:11px;line-height:16px;color:#000;transform:scaleX(1.1442);transform-origin:right;">1</span>
<span class="t" style="left:826.96px;top:431px;font-size:11px;line-height:16px;color:#000;transform:scaleX(1.1770);transform-origin:right;">$1,000.01</span>
<span class="t" style="left:916.96px;top:431px;font-size:11px;line-height:16px;color:#000;transform:scaleX(1.1770);transform-origin:right;">$1,000.00</span>
<span class="t" style="left:1027.07px;top:431px;font-size:11px;line-height:16px;font-weight:bold;color:#000;transform:scaleX(1.3296);transform-origin:right;">$0.01</span>
<span class="t" style="left:1076.57px;top:431px;font-size:11px;line-height:16px;color:#000;transform:scaleX(1.1882);transform-origin:right;">100.00%</span>
<div class="a" style="left:16px;top:447px;width:1107px;height:16px;background:#ffffff"></div>
<span class="t" style="left:52.53px;top:447px;font-size:11px;line-height:16px;color:#000;transform:scaleX(1.1442);transform-origin:right;">1553</span>
<span class="t" style="left:83.5px;top:447px;font-size:11px;line-height:16px;color:#000;transform:scaleX(1.0540);transform-origin:left;">TESORERIA</span><span class="t" style="left:154.5px;top:447px;font-size:11px;line-height:16px;color:#000;transform:scaleX(1.1002);transform-origin:left;">MUNICIPAL</span><span class="t" style="left:223.5px;top:447px;font-size:11px;line-height:16px;color:#000;transform:scaleX(1.0471);transform-origin:left;">DE</span><span class="t" style="left:243.5px;top:447px;font-size:11px;line-height:16px;color:#000;transform:scaleX(1.0888);transform-origin:left;">ARTEAGA...</span>
<span class="t" style="left:779.28px;top:447px;font-size:11px;line-height:16px;color:#000;transform:scaleX(1.1442);transform-origin:right;">1</span>
<span class="t" style="left:814.73px;top:447px;font-size:11px;line-height:16px;color:#000;transform:scaleX(1.1705);transform-origin:right;">$100,000.00</span>
<span class="t" style="left:910.85px;top:447px;font-size:11px;line-height:16px;color:#000;transform:scaleX(1.1734);transform-origin:right;">$68,855.61</span>
<span class="t" style="left:999.55px;top:447px;font-size:11px;line-height:16px;font-weight:bold;color:#000;transform:scaleX(1.3187);transform-origin:right;">$31,144.39</span>
<span class="t" style="left:1082.69px;top:447px;font-size:11px;line-height:16px;color:#000;transform:scaleX(1.1955);transform-origin:right;">68.86%</span>
<div class="a" style="left:16px;top:463px;width:1107px;height:16px;background:#f8edba"></div>
<span class="t" style="left:52.53px;top:463px;font-size:11px;line-height:16px;color:#000;transform:scaleX(1.1442);transform-origin:right;">1518</span>
<span class="t" style="left:83.5px;top:463px;font-size:11px;line-height:16px;color:#000;transform:scaleX(1.1487);transform-origin:left;">&quot;SILOZ</span><span class="t" style="left:128.5px;top:463px;font-size:11px;line-height:16px;color:#000;transform:scaleX(1.0381);transform-origin:left;">EXPRESS&quot;</span><span class="t" style="left:190.5px;top:463px;font-size:11px;line-height:16px;color:#000;transform:scaleX(1.0904);transform-origin:left;">SA</span><span class="t" style="left:210.5px;top:463px;font-size:11px;line-height:16px;color:#000;transform:scaleX(1.0471);transform-origin:left;">DE</span><span class="t" style="left:230.5px;top:463px;font-size:11px;line-height:16px;color:#000;transform:scaleX(1.1125);transform-origin:left;">CV</span>
<span class="t" style="left:779.28px;top:463px;font-size:11px;line-height:16px;color:#000;transform:scaleX(1.1442);transform-origin:right;">1</span>
<span class="t" style="left:826.96px;top:463px;font-size:11px;line-height:16px;color:#000;transform:scaleX(1.1770);transform-origin:right;">$5,820.00</span>
<span class="t" style="left:916.96px;top:463px;font-size:11px;line-height:16px;color:#000;transform:scaleX(1.1770);transform-origin:right;">$5,532.08</span>
<span class="t" style="left:1014.84px;top:463px;font-size:11px;line-height:16px;font-weight:bold;color:#000;transform:scaleX(1.3229);transform-origin:right;">$287.92</span>
<span class="t" style="left:1082.69px;top:463px;font-size:11px;line-height:16px;color:#000;transform:scaleX(1.1955);transform-origin:right;">95.05%</span>
<div class="a" style="left:16px;top:479px;width:1107px;height:16px;background:#ffffff"></div>
<span class="t" style="left:52.53px;top:479px;font-size:11px;line-height:16px;color:#000;transform:scaleX(1.1442);transform-origin:right;">1516</span>
<span class="t" style="left:83.5px;top:479px;font-size:11px;line-height:16px;color:#000;transform:scaleX(1.0421);transform-origin:left;">DESARROLLOS</span><span class="t" style="left:173.5px;top:479px;font-size:11px;line-height:16px;color:#000;transform:scaleX(1.1270);transform-origin:left;">INMOBILIARIOS</span><span class="t" style="left:270.5px;top:479px;font-size:11px;line-height:16px;color:#000;transform:scaleX(1.0502);transform-origin:left;">ARTEAGA</span><span class="t" style="left:329.5px;top:479px;font-size:11px;line-height:16px;color:#000;transform:scaleX(1.0904);transform-origin:left;">SA</span><span class="t" style="left:349.5px;top:479px;font-size:11px;line-height:16px;color:#000;transform:scaleX(1.0471);transform-origin:left;">DE</span><span class="t" style="left:369.5px;top:479px;font-size:11px;line-height:16px;color:#000;transform:scaleX(1.1125);transform-origin:left;">CV</span>
<span class="t" style="left:779.28px;top:479px;font-size:11px;line-height:16px;color:#000;transform:scaleX(1.1442);transform-origin:right;">1</span>
<span class="t" style="left:826.96px;top:479px;font-size:11px;line-height:16px;color:#000;transform:scaleX(1.1770);transform-origin:right;">$3,000.00</span>
<span class="t" style="left:938.37px;top:479px;font-size:11px;line-height:16px;color:#000;transform:scaleX(1.1843);transform-origin:right;">$0.00</span>
<span class="t" style="left:1005.66px;top:479px;font-size:11px;line-height:16px;font-weight:bold;color:#000;transform:scaleX(1.3201);transform-origin:right;">$3,000.00</span>
<span class="t" style="left:1088.81px;top:479px;font-size:11px;line-height:16px;color:#000;transform:scaleX(1.2055);transform-origin:right;">0.00%</span>
<div class="a" style="left:16px;top:495px;width:1107px;height:16px;background:#f8edba"></div>
<span class="t" style="left:52.53px;top:495px;font-size:11px;line-height:16px;color:#000;transform:scaleX(1.1442);transform-origin:right;">1515</span>
<span class="t" style="left:83.5px;top:495px;font-size:11px;line-height:16px;color:#000;transform:scaleX(1.0573);transform-origin:left;">CONSTRUCTORA</span><span class="t" style="left:185.5px;top:495px;font-size:11px;line-height:16px;color:#000;transform:scaleX(1.0594);transform-origin:left;">TOSAL</span>
<span class="t" style="left:779.28px;top:495px;font-size:11px;line-height:16px;color:#000;transform:scaleX(1.1442);transform-origin:right;">1</span>
<span class="t" style="left:820.85px;top:495px;font-size:11px;line-height:16px;color:#000;transform:scaleX(1.1734);transform-origin:right;">$12,269.30</span>
<span class="t" style="left:916.96px;top:495px;font-size:11px;line-height:16px;color:#000;transform:scaleX(1.1770);transform-origin:right;">$9,995.69</span>
<span class="t" style="left:1005.66px;top:495px;font-size:11px;line-height:16px;font-weight:bold;color:#000;transform:scaleX(1.3201);transform-origin:right;">$2,273.61</span>
<span class="t" style="left:1082.69px;top:495px;font-size:11px;line-height:16px;color:#000;transform:scaleX(1.1955);transform-origin:right;">81.47%</span>
<div class="a" style="left:16px;top:511px;width:1107px;height:16px;background:#ffffff"></div>
<span class="t" style="left:52.53px;top:511px;font-size:11px;line-height:16px;color:#000;transform:scaleX(1.1442);transform-origin:right;">1504</span>
<span class="t" style="left:83.5px;top:511px;font-size:11px;line-height:16px;color:#000;transform:scaleX(1.0540);transform-origin:left;">TESORERIA</span><span class="t" style="left:154.5px;top:511px;font-size:11px;line-height:16px;color:#000;transform:scaleX(1.1002);transform-origin:left;">MUNICIPAL</span><span class="t" style="left:223.5px;top:511px;font-size:11px;line-height:16px;color:#000;transform:scaleX(1.0471);transform-origin:left;">DE</span><span class="t" style="left:243.5px;top:511px;font-size:11px;line-height:16px;color:#000;transform:scaleX(1.0773);transform-origin:left;">ARTEAGA..</span>
<span class="t" style="left:779.28px;top:511px;font-size:11px;line-height:16px;color:#000;transform:scaleX(1.1442);transform-origin:right;">1</span>
<span class="t" style="left:814.73px;top:511px;font-size:11px;line-height:16px;color:#000;transform:scaleX(1.1705);transform-origin:right;">$120,000.00</span>
<span class="t" style="left:910.85px;top:511px;font-size:11px;line-height:16px;color:#000;transform:scaleX(1.1734);transform-origin:right;">$36,282.66</span>
<span class="t" style="left:999.55px;top:511px;font-size:11px;line-height:16px;font-weight:bold;color:#000;transform:scaleX(1.3187);transform-origin:right;">$83,717.34</span>
<span class="t" style="left:1082.69px;top:511px;font-size:11px;line-height:16px;color:#000;transform:scaleX(1.1955);transform-origin:right;">30.24%</span>
<div class="a" style="left:16px;top:527px;width:1107px;height:16px;background:#f8edba"></div>
<span class="t" style="left:52.53px;top:527px;font-size:11px;line-height:16px;color:#000;transform:scaleX(1.1442);transform-origin:right;">1501</span>
<span class="t" style="left:83.5px;top:527px;font-size:11px;line-height:16px;color:#000;transform:scaleX(1.0540);transform-origin:left;">TESORERIA</span><span class="t" style="left:154.5px;top:527px;font-size:11px;line-height:16px;color:#000;transform:scaleX(1.1002);transform-origin:left;">MUNICIPAL</span><span class="t" style="left:223.5px;top:527px;font-size:11px;line-height:16px;color:#000;transform:scaleX(1.0471);transform-origin:left;">DE</span><span class="t" style="left:243.5px;top:527px;font-size:11px;line-height:16px;color:#000;transform:scaleX(1.0645);transform-origin:left;">ARTEAGA.</span>
<span class="t" style="left:779.28px;top:527px;font-size:11px;line-height:16px;color:#000;transform:scaleX(1.1442);transform-origin:right;">2</span>
<span class="t" style="left:814.73px;top:527px;font-size:11px;line-height:16px;color:#000;transform:scaleX(1.1705);transform-origin:right;">$130,000.00</span>
<span class="t" style="left:910.85px;top:527px;font-size:11px;line-height:16px;color:#000;transform:scaleX(1.1734);transform-origin:right;">$83,924.22</span>
<span class="t" style="left:999.55px;top:527px;font-size:11px;line-height:16px;font-weight:bold;color:#000;transform:scaleX(1.3187);transform-origin:right;">$46,075.78</span>
<span class="t" style="left:1082.69px;top:527px;font-size:11px;line-height:16px;color:#000;transform:scaleX(1.1955);transform-origin:right;">64.56%</span>
<div class="a" style="left:16px;top:543px;width:1107px;height:16px;background:#ffffff"></div>
<span class="t" style="left:52.53px;top:543px;font-size:11px;line-height:16px;color:#000;transform:scaleX(1.1442);transform-origin:right;">1460</span>
<span class="t" style="left:83.5px;top:543px;font-size:11px;line-height:16px;color:#000;transform:scaleX(1.0326);transform-origin:left;">TRANSPORTES</span><span class="t" style="left:172.5px;top:543px;font-size:11px;line-height:16px;color:#000;transform:scaleX(1.0503);transform-origin:left;">VILLARREAL</span><span class="t" style="left:246.5px;top:543px;font-size:11px;line-height:16px;color:#000;transform:scaleX(1.0349);transform-origin:left;">BERLANGA</span><span class="t" style="left:312.5px;top:543px;font-size:11px;line-height:16px;color:#000;transform:scaleX(1.0904);transform-origin:left;">S</span><span class="t" style="left:324.5px;top:543px;font-size:11px;line-height:16px;color:#000;transform:scaleX(1.0904);transform-origin:left;">A</span><span class="t" style="left:336.5px;top:543px;font-size:11px;line-height:16px;color:#000;transform:scaleX(1.1329);transform-origin:left;">D</span><span class="t" style="left:349.5px;top:543px;font-size:11px;line-height:16px;color:#000;transform:scaleX(0.9541);transform-origin:left;">E</span><span class="t" style="left:360.5px;top:543px;font-size:11px;line-height:16px;color:#000;transform:scaleX(1.1329);transform-origin:left;">C</span><span class="t" style="left:373.5px;top:543px;font-size:11px;line-height:16px;color:#000;transform:scaleX(1.0904);transform-origin:left;">V</span>
<span class="t" style="left:779.28px;top:543px;font-size:11px;line-height:16px;color:#000;transform:scaleX(1.1442);transform-origin:right;">2</span>
<span class="t" style="left:814.73px;top:543px;font-size:11px;line-height:16px;color:#000;transform:scaleX(1.1705);transform-origin:right;">$200,000.00</span>
<span class="t" style="left:938.37px;top:543px;font-size:11px;line-height:16px;color:#000;transform:scaleX(1.1843);transform-origin:right;">$0.00</span>
<span class="t" style="left:993.43px;top:543px;font-size:11px;line-height:16px;font-weight:bold;color:#000;transform:scaleX(1.3176);transform-origin:right;">$200,000.00</span>
<span class="t" style="left:1088.81px;top:543px;font-size:11px;line-height:16px;color:#000;transform:scaleX(1.2055);transform-origin:right;">0.00%</span>
<div class="a" style="left:16px;top:559px;width:1107px;height:16px;background:#f8edba"></div>
<span class="t" style="left:58.65px;top:559px;font-size:11px;line-height:16px;color:#000;transform:scaleX(1.1442);transform-origin:right;">978</span>
<span class="t" style="left:83.5px;top:559px;font-size:11px;line-height:16px;color:#000;transform:scaleX(1.0611);transform-origin:left;">ANA</span><span class="t" style="left:111.5px;top:559px;font-size:11px;line-height:16px;color:#000;transform:scaleX(1.0281);transform-origin:left;">DEL</span><span class="t" style="left:137.5px;top:559px;font-size:11px;line-height:16px;color:#000;transform:scaleX(1.0279);transform-origin:left;">CARMEN</span><span class="t" style="left:190.5px;top:559px;font-size:11px;line-height:16px;color:#000;transform:scaleX(1.0246);transform-origin:left;">FEREGRINO</span><span class="t" style="left:261.5px;top:559px;font-size:11px;line-height:16px;color:#000;transform:scaleX(1.0136);transform-origin:left;">PUEBLA</span>
<span class="t" style="left:779.28px;top:559px;font-size:11px;line-height:16px;color:#000;transform:scaleX(1.1442);transform-origin:right;">1</span>
<span class="t" style="left:820.85px;top:559px;font-size:11px;line-height:16px;color:#000;transform:scaleX(1.1734);transform-origin:right;">$20,000.00</span>
<span class="t" style="left:916.96px;top:559px;font-size:11px;line-height:16px;color:#000;transform:scaleX(1.1770);transform-origin:right;">$6,994.77</span>
<span class="t" style="left:999.55px;top:559px;font-size:11px;line-height:16px;font-weight:bold;color:#000;transform:scaleX(1.3187);transform-origin:right;">$13,005.23</span>
<span class="t" style="left:1082.69px;top:559px;font-size:11px;line-height:16px;color:#000;transform:scaleX(1.1955);transform-origin:right;">34.97%</span>
<div class="a" style="left:16px;top:575px;width:1107px;height:16px;background:#ffffff"></div>
<span class="t" style="left:58.65px;top:575px;font-size:11px;line-height:16px;color:#000;transform:scaleX(1.1442);transform-origin:right;">951</span>
<span class="t" style="left:83.5px;top:575px;font-size:11px;line-height:16px;color:#000;transform:scaleX(1.0573);transform-origin:left;">CONSTRUCTORA</span><span class="t" style="left:185.5px;top:575px;font-size:11px;line-height:16px;color:#000;transform:scaleX(0.9541);transform-origin:left;">Y</span><span class="t" style="left:196.5px;top:575px;font-size:11px;line-height:16px;color:#000;transform:scaleX(1.0937);transform-origin:left;">COMERCIALIZADORA</span><span class="t" style="left:325.5px;top:575px;font-size:11px;line-height:16px;color:#000;transform:scaleX(1.0581);transform-origin:left;">VALMAR</span><span class="t" style="left:376.5px;top:575px;font-size:11px;line-height:16px;color:#000;transform:scaleX(1.0904);transform-origin:left;">SA</span><span class="t" style="left:396.5px;top:575px;font-size:11px;line-height:16px;color:#000;transform:scaleX(1.0471);transform-origin:left;">DE</span><span class="t" style="left:416.5px;top:575px;font-size:11px;line-height:16px;color:#000;transform:scaleX(1.1125);transform-origin:left;">CV</span>
<span class="t" style="left:779.28px;top:575px;font-size:11px;line-height:16px;color:#000;transform:scaleX(1.1442);transform-origin:right;">1</span>
<span class="t" style="left:836.14px;top:575px;font-size:11px;line-height:16px;color:#000;transform:scaleX(1.1720);transform-origin:right;">$800.00</span>
<span class="t" style="left:926.14px;top:575px;font-size:11px;line-height:16px;color:#000;transform:scaleX(1.1720);transform-origin:right;">$799.64</span>
<span class="t" style="left:1027.07px;top:575px;font-size:11px;line-height:16px;font-weight:bold;color:#000;transform:scaleX(1.3296);transform-origin:right;">$0.36</span>
<span class="t" style="left:1082.69px;top:575px;font-size:11px;line-height:16px;color:#000;transform:scaleX(1.1955);transform-origin:right;">99.96%</span>
<div class="a" style="left:16px;top:591px;width:1107px;height:16px;background:#f8edba"></div>
<span class="t" style="left:58.65px;top:591px;font-size:11px;line-height:16px;color:#000;transform:scaleX(1.1442);transform-origin:right;">904</span>
<span class="t" style="left:83.5px;top:591px;font-size:11px;line-height:16px;color:#000;transform:scaleX(0.9769);transform-origin:left;">YENELU</span><span class="t" style="left:130.5px;top:591px;font-size:11px;line-height:16px;color:#000;transform:scaleX(1.0904);transform-origin:left;">SA</span><span class="t" style="left:150.5px;top:591px;font-size:11px;line-height:16px;color:#000;transform:scaleX(1.0471);transform-origin:left;">DE</span><span class="t" style="left:170.5px;top:591px;font-size:11px;line-height:16px;color:#000;transform:scaleX(1.1125);transform-origin:left;">CV</span>
<span class="t" style="left:779.28px;top:591px;font-size:11px;line-height:16px;color:#000;transform:scaleX(1.1442);transform-origin:right;">1</span>
<span class="t" style="left:826.96px;top:591px;font-size:11px;line-height:16px;color:#000;transform:scaleX(1.1770);transform-origin:right;">$3,610.00</span>
<span class="t" style="left:916.96px;top:591px;font-size:11px;line-height:16px;color:#000;transform:scaleX(1.1770);transform-origin:right;">$2,419.06</span>
<span class="t" style="left:1005.66px;top:591px;font-size:11px;line-height:16px;font-weight:bold;color:#000;transform:scaleX(1.3201);transform-origin:right;">$1,190.94</span>
<span class="t" style="left:1082.69px;top:591px;font-size:11px;line-height:16px;color:#000;transform:scaleX(1.1955);transform-origin:right;">67.01%</span>
<div class="a" style="left:16px;top:607px;width:1107px;height:16px;background:#ffffff"></div>
<span class="t" style="left:58.65px;top:607px;font-size:11px;line-height:16px;color:#000;transform:scaleX(1.1442);transform-origin:right;">851</span>
<span class="t" style="left:83.5px;top:607px;font-size:11px;line-height:16px;color:#000;transform:scaleX(1.1222);transform-origin:left;">SERVICIOS</span><span class="t" style="left:154.5px;top:607px;font-size:11px;line-height:16px;color:#000;transform:scaleX(1.0865);transform-origin:left;">INDUSTRIALES</span><span class="t" style="left:245.5px;top:607px;font-size:11px;line-height:16px;color:#000;transform:scaleX(1.0908);transform-origin:left;">TECNICOS</span><span class="t" style="left:311.5px;top:607px;font-size:11px;line-height:16px;color:#000;transform:scaleX(1.0471);transform-origin:left;">DE</span><span class="t" style="left:331.5px;top:607px;font-size:11px;line-height:16px;color:#000;transform:scaleX(1.0882);transform-origin:left;">SALTILLO</span><span class="t" style="left:390.5px;top:607px;font-size:11px;line-height:16px;color:#000;transform:scaleX(1.0904);transform-origin:left;">SA</span><span class="t" style="left:410.5px;top:607px;font-size:11px;line-height:16px;color:#000;transform:scaleX(1.0471);transform-origin:left;">DE</span><span class="t" style="left:430.5px;top:607px;font-size:11px;line-height:16px;color:#000;transform:scaleX(1.1125);transform-origin:left;">CV</span>
<span class="t" style="left:779.28px;top:607px;font-size:11px;line-height:16px;color:#000;transform:scaleX(1.1442);transform-origin:right;">1</span>
<span class="t" style="left:826.96px;top:607px;font-size:11px;line-height:16px;color:#000;transform:scaleX(1.1770);transform-origin:right;">$8,390.00</span>
<span class="t" style="left:916.96px;top:607px;font-size:11px;line-height:16px;color:#000;transform:scaleX(1.1770);transform-origin:right;">$8,292.22</span>
<span class="t" style="left:1020.96px;top:607px;font-size:11px;line-height:16px;font-weight:bold;color:#000;transform:scaleX(1.3256);transform-origin:right;">$97.78</span>
<span class="t" style="left:1082.69px;top:607px;font-size:11px;line-height:16px;color:#000;transform:scaleX(1.1955);transform-origin:right;">98.83%</span>
<div class="a" style="left:16px;top:623px;width:1107px;height:16px;background:#f8edba"></div>
<span class="t" style="left:58.65px;top:623px;font-size:11px;line-height:16px;color:#000;transform:scaleX(1.1442);transform-origin:right;">833</span>
<span class="t" style="left:83.5px;top:623px;font-size:11px;line-height:16px;color:#000;transform:scaleX(1.0906);transform-origin:left;">AGRICOLA</span><span class="t" style="left:149.5px;top:623px;font-size:11px;line-height:16px;color:#000;transform:scaleX(0.9541);transform-origin:left;">Y</span><span class="t" style="left:160.5px;top:623px;font-size:11px;line-height:16px;color:#000;transform:scaleX(1.0529);transform-origin:left;">GANADERA</span><span class="t" style="left:229.5px;top:623px;font-size:11px;line-height:16px;color:#000;transform:scaleX(1.1723);transform-origin:left;">ALVI</span><span class="t" style="left:260.5px;top:623px;font-size:11px;line-height:16px;color:#000;transform:scaleX(1.0904);transform-origin:left;">SA</span><span class="t" style="left:280.5px;top:623px;font-size:11px;line-height:16px;color:#000;transform:scaleX(1.0471);transform-origin:left;">DE</span><span class="t" style="left:300.5px;top:623px;font-size:11px;line-height:16px;color:#000;transform:scaleX(1.1125);transform-origin:left;">CV</span>
<span class="t" style="left:779.28px;top:623px;font-size:11px;line-height:16px;color:#000;transform:scaleX(1.1442);transform-origin:right;">1</span>
<span class="t" style="left:826.96px;top:623px;font-size:11px;line-height:16px;color:#000;transform:scaleX(1.1770);transform-origin:right;">$5,000.00</span>
<span class="t" style="left:926.14px;top:623px;font-size:11px;line-height:16px;color:#000;transform:scaleX(1.1720);transform-origin:right;">$400.00</span>
<span class="t" style="left:1005.66px;top:623px;font-size:11px;line-height:16px;font-weight:bold;color:#000;transform:scaleX(1.3201);transform-origin:right;">$4,600.00</span>
<span class="t" style="left:1088.81px;top:623px;font-size:11px;line-height:16px;color:#000;transform:scaleX(1.2055);transform-origin:right;">8.00%</span>
<div class="a" style="left:16px;top:639px;width:1107px;height:16px;background:#ffffff"></div>
<span class="t" style="left:58.65px;top:639px;font-size:11px;line-height:16px;color:#000;transform:scaleX(1.1442);transform-origin:right;">774</span>
<span class="t" style="left:83.5px;top:639px;font-size:11px;line-height:16px;color:#000;transform:scaleX(1.1266);transform-origin:left;">SERVICIO</span><span class="t" style="left:146.5px;top:639px;font-size:11px;line-height:16px;color:#000;transform:scaleX(1.0744);transform-origin:left;">SIERRA</span><span class="t" style="left:194.5px;top:639px;font-size:11px;line-height:16px;color:#000;transform:scaleX(1.0471);transform-origin:left;">DE</span><span class="t" style="left:214.5px;top:639px;font-size:11px;line-height:16px;color:#000;transform:scaleX(1.0502);transform-origin:left;">ARTEAGA</span>
<span class="t" style="left:779.28px;top:639px;font-size:11px;line-height:16px;color:#000;transform:scaleX(1.1442);transform-origin:right;">3</span>
<span class="t" style="left:820.85px;top:639px;font-size:11px;line-height:16px;color:#000;transform:scaleX(1.1734);transform-origin:right;">$12,000.00</span>
<span class="t" style="left:938.37px;top:639px;font-size:11px;line-height:16px;color:#000;transform:scaleX(1.1843);transform-origin:right;">$0.00</span>
<span class="t" style="left:999.55px;top:639px;font-size:11px;line-height:16px;font-weight:bold;color:#000;transform:scaleX(1.3187);transform-origin:right;">$12,000.00</span>
<span class="t" style="left:1088.81px;top:639px;font-size:11px;line-height:16px;color:#000;transform:scaleX(1.2055);transform-origin:right;">0.00%</span>
<div class="a" style="left:16px;top:655px;width:1107px;height:16px;background:#f8edba"></div>
<span class="t" style="left:58.65px;top:655px;font-size:11px;line-height:16px;color:#000;transform:scaleX(1.1442);transform-origin:right;">727</span>
<span class="t" style="left:83.5px;top:655px;font-size:11px;line-height:16px;color:#000;transform:scaleX(1.1017);transform-origin:left;">CASA</span><span class="t" style="left:120.5px;top:655px;font-size:11px;line-height:16px;color:#000;transform:scaleX(1.0412);transform-origin:left;">HOGAR</span><span class="t" style="left:166.5px;top:655px;font-size:11px;line-height:16px;color:#000;transform:scaleX(1.0471);transform-origin:left;">DE</span><span class="t" style="left:186.5px;top:655px;font-size:11px;line-height:16px;color:#000;transform:scaleX(1.0405);transform-origin:left;">LA</span><span class="t" style="left:204.5px;top:655px;font-size:11px;line-height:16px;color:#000;transform:scaleX(1.0520);transform-origin:left;">MONTAÑA</span><span class="t" style="left:265.5px;top:655px;font-size:11px;line-height:16px;color:#000;transform:scaleX(1.1125);transform-origin:left;">AC</span>
<span class="t" style="left:779.28px;top:655px;font-size:11px;line-height:16px;color:#000;transform:scaleX(1.1442);transform-origin:right;">1</span>
<span class="t" style="left:820.85px;top:655px;font-size:11px;line-height:16px;color:#000;transform:scaleX(1.1734);transform-origin:right;">$20,000.00</span>
<span class="t" style="left:916.96px;top:655px;font-size:11px;line-height:16px;color:#000;transform:scaleX(1.1770);transform-origin:right;">$5,493.60</span>
<span class="t" style="left:999.55px;top:655px;font-size:11px;line-height:16px;font-weight:bold;color:#000;transform:scaleX(1.3187);transform-origin:right;">$14,506.40</span>
<span class="t" style="left:1082.69px;top:655px;font-size:11px;line-height:16px;color:#000;transform:scaleX(1.1955);transform-origin:right;">27.47%</span>
<div class="a" style="left:16px;top:671px;width:1107px;height:16px;background:#ffffff"></div>
<span class="t" style="left:58.65px;top:671px;font-size:11px;line-height:16px;color:#000;transform:scaleX(1.1442);transform-origin:right;">182</span>
<span class="t" style="left:83.5px;top:671px;font-size:11px;line-height:16px;color:#000;transform:scaleX(1.0682);transform-origin:left;">ALTEC</span><span class="t" style="left:124.5px;top:671px;font-size:11px;line-height:16px;color:#000;transform:scaleX(1.0397);transform-origin:left;">ALUMINUM</span><span class="t" style="left:189.5px;top:671px;font-size:11px;line-height:16px;color:#000;transform:scaleX(1.1546);transform-origin:left;">S.A.</span><span class="t" style="left:217.5px;top:671px;font-size:11px;line-height:16px;color:#000;transform:scaleX(1.0471);transform-origin:left;">DE</span><span class="t" style="left:237.5px;top:671px;font-size:11px;line-height:16px;color:#000;transform:scaleX(1.2265);transform-origin:left;">C.V.</span>
<span class="t" style="left:779.28px;top:671px;font-size:11px;line-height:16px;color:#000;transform:scaleX(1.1442);transform-origin:right;">1</span>
<span class="t" style="left:820.85px;top:671px;font-size:11px;line-height:16px;color:#000;transform:scaleX(1.1734);transform-origin:right;">$10,000.00</span>
<span class="t" style="left:916.96px;top:671px;font-size:11px;line-height:16px;color:#000;transform:scaleX(1.1770);transform-origin:right;">$9,999.51</span>
<span class="t" style="left:1027.07px;top:671px;font-size:11px;line-height:16px;font-weight:bold;color:#000;transform:scaleX(1.3296);transform-origin:right;">$0.49</span>
<span class="t" style="left:1076.57px;top:671px;font-size:11px;line-height:16px;color:#000;transform:scaleX(1.1882);transform-origin:right;">100.00%</span>
<div class="a" style="left:16px;top:687px;width:1107px;height:16px;background:#f8edba"></div>
<span class="t" style="left:64.76px;top:687px;font-size:11px;line-height:16px;color:#000;transform:scaleX(1.1442);transform-origin:right;">95</span>
<span class="t" style="left:83.5px;top:687px;font-size:11px;line-height:16px;color:#000;transform:scaleX(1.0586);transform-origin:left;">ESTRADA</span><span class="t" style="left:142.5px;top:687px;font-size:11px;line-height:16px;color:#000;transform:scaleX(0.9541);transform-origin:left;">Y</span><span class="t" style="left:153.5px;top:687px;font-size:11px;line-height:16px;color:#000;transform:scaleX(1.1998);transform-origin:left;">CIA</span><span class="t" style="left:179.5px;top:687px;font-size:11px;line-height:16px;color:#000;transform:scaleX(1.0471);transform-origin:left;">DE</span><span class="t" style="left:199.5px;top:687px;font-size:11px;line-height:16px;color:#000;transform:scaleX(1.1818);transform-origin:left;">C.</span>
<span class="t" style="left:779.28px;top:687px;font-size:11px;line-height:16px;color:#000;transform:scaleX(1.1442);transform-origin:right;">1</span>
<span class="t" style="left:826.96px;top:687px;font-size:11px;line-height:16px;color:#000;transform:scaleX(1.1770);transform-origin:right;">$9,583.40</span>
<span class="t" style="left:916.96px;top:687px;font-size:11px;line-height:16px;color:#000;transform:scaleX(1.1770);transform-origin:right;">$7,096.04</span>
<span class="t" style="left:1005.66px;top:687px;font-size:11px;line-height:16px;font-weight:bold;color:#000;transform:scaleX(1.3201);transform-origin:right;">$2,487.37</span>
<span class="t" style="left:1076.57px;top:687px;font-size:11px;line-height:16px;color:#000;transform:scaleX(1.1882);transform-origin:right;">100.00%</span>
</div>
<div class="a" style="left:16px;top:142px;width:1114px;height:1px;background:#0a78d6"></div>
<div class="a" style="left:16px;top:127px;width:1px;height:15px;background:#0a78d6"></div>
<div class="a" style="left:1129px;top:127px;width:1px;height:15px;background:#0a78d6"></div>
<div class="a" style="left:1123px;top:126px;width:7px;height:1px;background:#000"></div>
<div class="a" style="left:80px;top:126px;width:1px;height:566px;background:#000"></div>
<div class="a" style="left:716px;top:126px;width:1px;height:566px;background:#000"></div>
<div class="a" style="left:788px;top:126px;width:1px;height:566px;background:#000"></div>
<div class="a" style="left:878px;top:126px;width:1px;height:566px;background:#000"></div>
<div class="a" style="left:968px;top:126px;width:1px;height:566px;background:#000"></div>
<div class="a" style="left:1057px;top:126px;width:1px;height:566px;background:#000"></div>
<div class="a" style="left:1123px;top:126px;width:1px;height:566px;background:#000"></div>
<div class="a" style="left:1124px;top:127px;width:6px;height:15px;background:#a4cdef"></div>
<div class="a" style="left:1131px;top:112px;width:16px;height:580px;background:#f0f0f0"></div>
<div class="a" style="left:1131px;top:128px;width:15px;height:520px;background:#cdcdcd"></div>
<div class="a" style="left:16px;top:692px;width:1115px;height:17px;background:#fff"></div>
<div class="a" style="left:22px;top:693px;width:1109px;height:15px;background:#f0f0f0"></div>
<div class="a" style="left:17px;top:692px;width:4px;height:16px;background:#000"></div>
<svg class="a" style="left:0;top:0" width="1159" height="726"><path d="M1135.3 122.3 L1138.5 118.3 L1141.7 122.3 M1135.3 682.9 L1138.5 686.9 L1141.7 682.9 M31.3 697.6 L27.2 700.7 L31.3 703.8 M1120.7 698.3 L1124.9 701.3 L1120.7 704.3" stroke="#5a5a5a" stroke-width="2" fill="none"/></svg>
<div class="a" style="left:1129px;top:127px;width:1px;height:16px;background:#0a78d6"></div>
<svg class="a" style="left:670px;top:536px" width="112" height="96"><defs><filter id="sh" x="-20%" y="-20%" width="140%" height="140%"><feGaussianBlur stdDeviation="1.6"/></filter></defs><path d="M8.5 20.5 L86.5 20.5 L103 8.5 L98.5 20.5 L101.5 20.5 L101.5 86.5 L8.5 86.5 Z" fill="rgba(0,0,0,0.5)" filter="url(#sh)"/><path d="M5.5 17.5 L83.5 17.5 L100 5.5 L95.5 17.5 L98.5 17.5 L98.5 83.5 L5.5 83.5 Z" fill="#ffffe1" stroke="#000" stroke-width="1.2"/></svg>
<span class="t" style="left:695.74px;top:570px;font-size:11px;line-height:13px;color:#000;transform:scaleX(1.2412);transform-origin:left;">Total</span><span class="t" style="left:728.7px;top:570px;font-size:11px;line-height:13px;color:#000;transform:scaleX(1.2309);transform-origin:left;">por</span>
<span class="t" style="left:685.95px;top:583px;font-size:11px;line-height:13px;color:#000;transform:scaleX(1.2109);transform-origin:left;">facturas</span><span class="t" style="left:737.45px;top:583px;font-size:11px;line-height:13px;color:#000;transform:scaleX(1.1615);transform-origin:left;">con</span>
<span class="t" style="left:683.89px;top:596px;font-size:11px;line-height:13px;color:#000;transform:scaleX(1.1750);transform-origin:left;">saldo</span><span class="t" style="left:718.91px;top:596px;font-size:11px;line-height:13px;color:#000;transform:scaleX(1.1785);transform-origin:left;">a</span><span class="t" style="left:730.24px;top:596px;font-size:11px;line-height:13px;color:#000;transform:scaleX(1.2214);transform-origin:left;">favor</span>
</body></html>
